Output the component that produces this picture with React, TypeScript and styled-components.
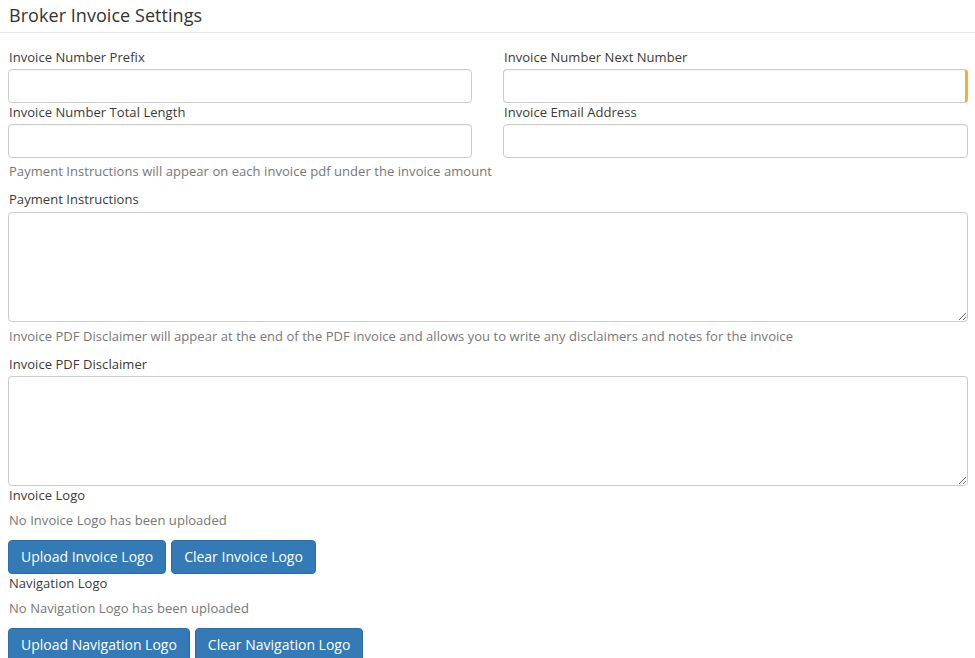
import React from "react";
import styled, { createGlobalStyle } from "styled-components";

const Global = createGlobalStyle`
  html, body { margin: 0; padding: 0; background: #fff; }
  body { font-family: "Open Sans", "Noto Sans", Arial, sans-serif; color: #333; }
  * { box-sizing: border-box; }
`;

const Page = styled.div`
  width: 975px;
`;

const Header = styled.div`
  height: 33px;
  border-bottom: 1px solid #e5e5e5;
  padding: 3px 0 0 9px;
`;

const Title = styled.h1`
  margin: 0;
  font-size: 18px;
  font-weight: 400;
  line-height: 24px;
  color: #333;
  letter-spacing: 0.05px;
`;

const Body = styled.div`
  padding: 15px 7px 0 8px;
  display: flex;
  flex-direction: column;
`;

const Grid = styled.div`
  display: grid;
  grid-template-columns: 464px 465px;
  column-gap: 31px;
`;

const Field = styled.div`
  display: flex;
  flex-direction: column;
`;

const Label = styled.label<{ $mb?: number }>`
  font-size: 13px;
  line-height: 18px;
  margin: 0 0 ${(p) => p.$mb ?? 3}px 1px;
  color: #3a3a3a;
  letter-spacing: 0.05px;
`;

const Input = styled.input<{ $flag?: boolean }>`
  height: 34px;
  width: 100%;
  border: 1px solid #ccc;
  border-radius: 4px;
  font: inherit;
  font-size: 14px;
  padding: 6px 12px;
  box-shadow: inset 0 1px 1px rgba(0, 0, 0, 0.04);
  ${(p) => (p.$flag ? "border-right: 3px solid #f2b134;" : "")}
  outline: none;
`;

const TextArea = styled.textarea`
  height: 110px;
  width: 100%;
  border: 1px solid #ccc;
  border-radius: 4px;
  font: inherit;
  font-size: 14px;
  padding: 6px 12px;
  resize: vertical;
  display: block;
  outline: none;
`;

const Help = styled.div<{ $mt: number; $mb: number }>`
  font-size: 13px;
  line-height: 18px;
  color: #777;
  letter-spacing: 0.05px;
  margin: ${(p) => p.$mt}px 0 ${(p) => p.$mb}px 1px;
`;

const ButtonRow = styled.div`
  display: flex;
  gap: 5px;
`;

const Button = styled.button`
  height: 34px;
  padding: 0 12px;
  background: #337ab7;
  border: 1px solid #2e6da4;
  border-radius: 4px;
  color: #fff;
  font-family: "Open Sans", "Noto Sans", Arial, sans-serif;
  font-size: 14px;
  line-height: 20px;
  cursor: pointer;
`;

export default function App() {
  return (
    <Page>
      <Global />
      <Header>
        <Title>Broker Invoice Settings</Title>
      </Header>
      <Body>
        <Grid>
          <Field>
            <Label>Invoice Number Prefix</Label>
            <Input />
          </Field>
          <Field>
            <Label>Invoice Number Next Number</Label>
            <Input $flag />
          </Field>
          <Field>
            <Label>Invoice Number Total Length</Label>
            <Input />
          </Field>
          <Field>
            <Label>Invoice Email Address</Label>
            <Input />
          </Field>
        </Grid>
        <Help $mt={4} $mb={10}>
          Payment Instructions will appear on each invoice pdf under the invoice amount
        </Help>
        <Label $mb={4}>Payment Instructions</Label>
        <TextArea />
        <Help $mt={5} $mb={10}>
          Invoice PDF Disclaimer will appear at the end of the PDF invoice and allows you to write any disclaimers and notes for the invoice
        </Help>
        <Label $mb={3}>Invoice PDF Disclaimer</Label>
        <TextArea />
        <Label $mb={0}>Invoice Logo</Label>
        <Help $mt={7} $mb={11}>No Invoice Logo has been uploaded</Help>
        <ButtonRow>
          <Button>Upload Invoice Logo</Button>
          <Button>Clear Invoice Logo</Button>
        </ButtonRow>
        <Label $mb={0}>Navigation Logo</Label>
        <Help $mt={7} $mb={11}>No Navigation Logo has been uploaded</Help>
        <ButtonRow>
          <Button>Upload Navigation Logo</Button>
          <Button>Clear Navigation Logo</Button>
        </ButtonRow>
      </Body>
    </Page>
  );
}
